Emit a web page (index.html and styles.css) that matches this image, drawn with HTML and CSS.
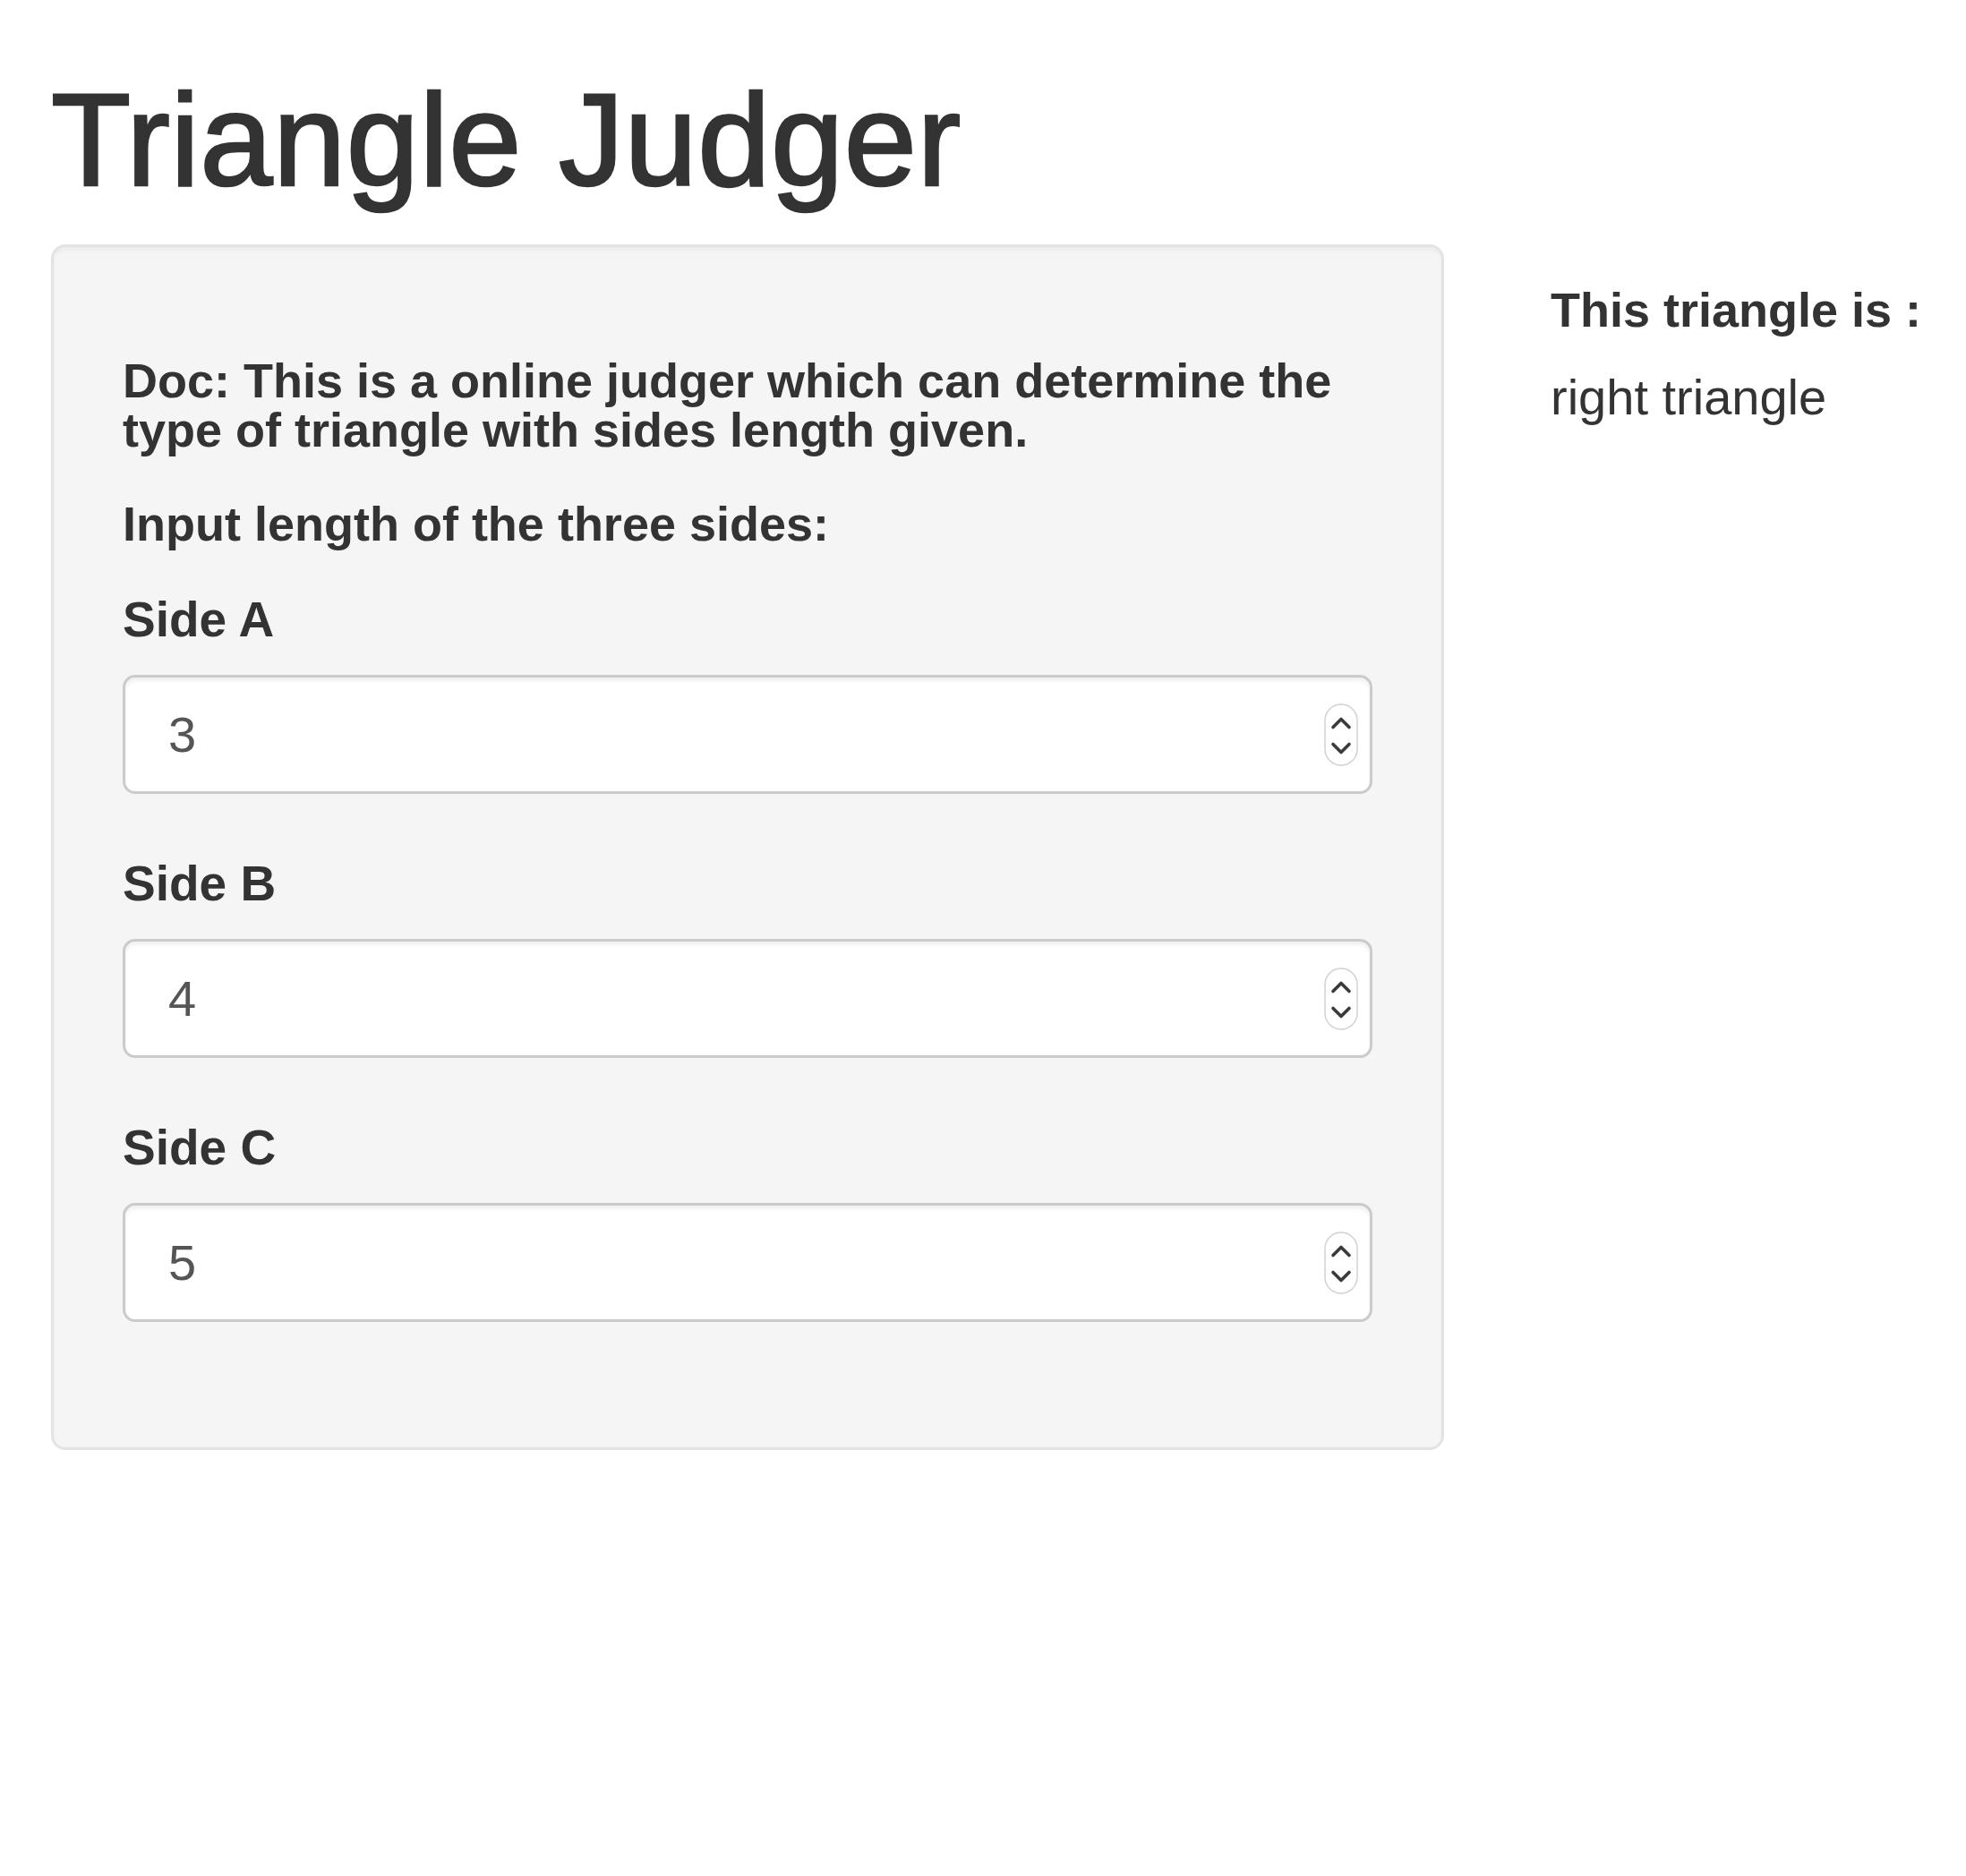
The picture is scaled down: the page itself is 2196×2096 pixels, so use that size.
FILE: index.html
```html
<!DOCTYPE html>
<html lang="en">
<head>
<meta charset="utf-8">
<title>Triangle Judger</title>
<link rel="stylesheet" href="styles.css">
</head>
<body>
<div class="page">
  <h1 class="title">Triangle Judger</h1>
  <div class="row">
    <div class="well">
      <p class="doc">Doc: This is a online judger which can determine the type of triangle with sides length given.</p>
      <p class="intro">Input length of the three sides:</p>
      <div class="group">
        <label class="label">Side A</label>
        <div class="field"><span class="value">3</span>
          <svg class="spin" width="38" height="70" viewBox="0 0 38 70"><rect x="1" y="1" width="36" height="68" rx="18" fill="#fff" stroke="#d2d2d2" stroke-width="1.5"/><path d="M10 26.5 L19 17.5 L28 26.5" fill="none" stroke="#3a3a3a" stroke-width="3.6" stroke-linecap="round" stroke-linejoin="round"/><path d="M10 45.5 L19 54.5 L28 45.5" fill="none" stroke="#3a3a3a" stroke-width="3.6" stroke-linecap="round" stroke-linejoin="round"/></svg>
        </div>
      </div>
      <div class="group">
        <label class="label">Side B</label>
        <div class="field"><span class="value">4</span>
          <svg class="spin" width="38" height="70" viewBox="0 0 38 70"><rect x="1" y="1" width="36" height="68" rx="18" fill="#fff" stroke="#d2d2d2" stroke-width="1.5"/><path d="M10 26.5 L19 17.5 L28 26.5" fill="none" stroke="#3a3a3a" stroke-width="3.6" stroke-linecap="round" stroke-linejoin="round"/><path d="M10 45.5 L19 54.5 L28 45.5" fill="none" stroke="#3a3a3a" stroke-width="3.6" stroke-linecap="round" stroke-linejoin="round"/></svg>
        </div>
      </div>
      <div class="group">
        <label class="label">Side C</label>
        <div class="field"><span class="value">5</span>
          <svg class="spin" width="38" height="70" viewBox="0 0 38 70"><rect x="1" y="1" width="36" height="68" rx="18" fill="#fff" stroke="#d2d2d2" stroke-width="1.5"/><path d="M10 26.5 L19 17.5 L28 26.5" fill="none" stroke="#3a3a3a" stroke-width="3.6" stroke-linecap="round" stroke-linejoin="round"/><path d="M10 45.5 L19 54.5 L28 45.5" fill="none" stroke="#3a3a3a" stroke-width="3.6" stroke-linecap="round" stroke-linejoin="round"/></svg>
        </div>
      </div>
    </div>
    <div class="side">
      <p class="side-head">This triangle is :</p>
      <p class="result">right triangle</p>
    </div>
  </div>
</div>
</body>
</html>
```
FILE: styles.css
```css
html, body {
  margin: 0;
  padding: 0;
  background: #fff;
}
body {
  font-family: "Liberation Sans", Arial, Helvetica, sans-serif;
  color: #333;
}
.page {
  padding-left: 57px;
}
.title {
  font-size: 146px;
  line-height: 160px;
  font-weight: 400;
  letter-spacing: 0.5px;
  -webkit-text-stroke: 2.5px #333;
  margin: 77px 0 36px;
}
.row {
  display: flex;
  align-items: flex-start;
}
.well {
  box-sizing: border-box;
  width: 1556px;
  flex: none;
  background: #f5f5f5;
  border: 3px solid #e3e3e3;
  border-radius: 16px;
  padding: 77px 77px 67px;
  box-shadow: inset 0 4px 4px rgba(0, 0, 0, 0.04);
}
.doc {
  margin: 45px 0 0;
  font-size: 54px;
  line-height: 55px;
  font-weight: 700;
}
.intro {
  margin: 50px 0 53px;
  font-size: 54px;
  line-height: 54px;
  font-weight: 700;
}
.group {
  margin-bottom: 73px;
}
.label {
  display: block;
  font-size: 55px;
  line-height: 55px;
  font-weight: 700;
  margin-bottom: 34px;
}
.field {
  box-sizing: border-box;
  height: 133px;
  display: flex;
  align-items: center;
  justify-content: space-between;
  background: #fff;
  border: 3px solid #cbcbcb;
  border-radius: 14px;
  padding: 0 13px 0 48px;
  box-shadow: inset 0 4px 4px rgba(0, 0, 0, 0.06);
}
.value {
  font-size: 56px;
  color: #555;
}
.spin {
  display: block;
  flex: none;
}
.side {
  margin-left: 119px;
  padding-top: 46px;
}
.side-head {
  margin: 0;
  font-size: 54px;
  line-height: 54px;
  font-weight: 700;
}
.result {
  margin: 43px 0 0;
  font-size: 56px;
  line-height: 56px;
}
```
